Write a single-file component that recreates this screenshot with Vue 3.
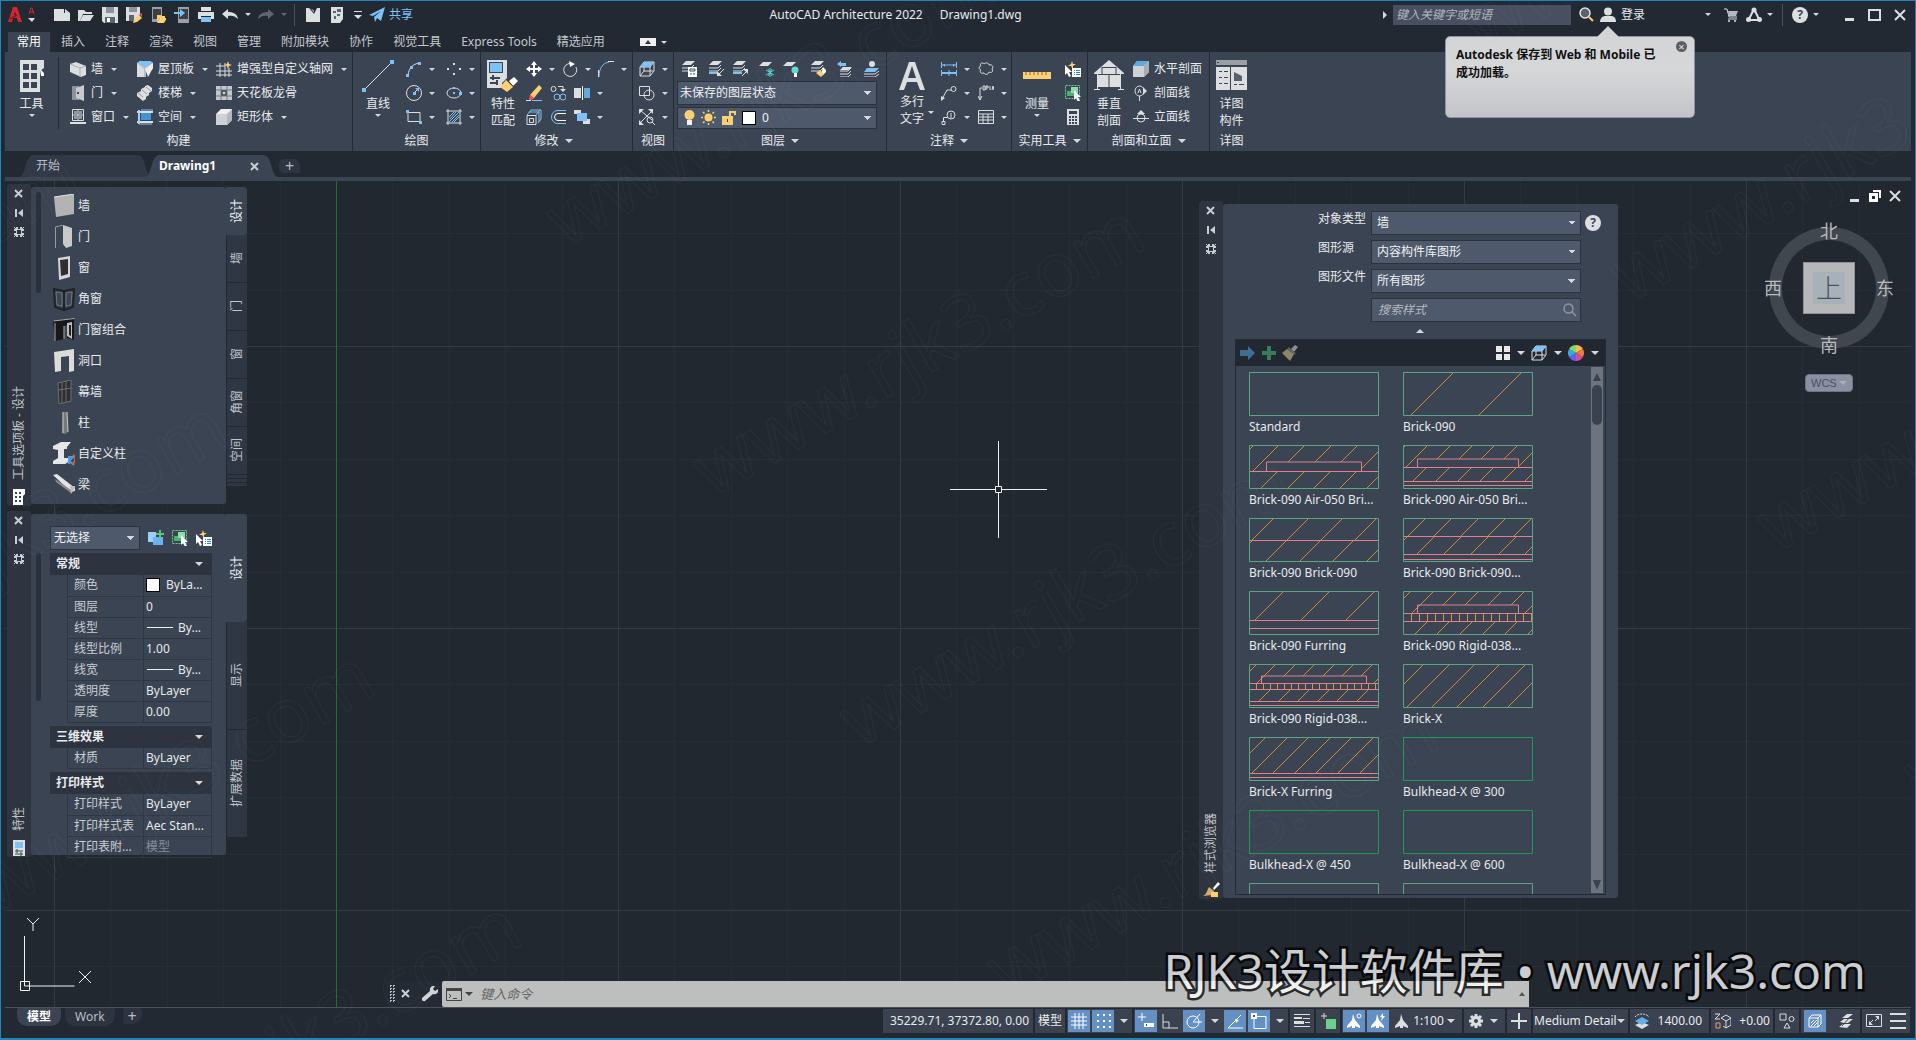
<script setup>
import { h, ref } from 'vue'

const W = '#dcdee0'
const B = '#7ec2f5'
const Y = '#fbcf74'
const D = '#3b4453'
const G = '#6fcf8f'

const s = (d, c = W, w = 1) => `<path d="${d}" fill="none" stroke="${c}" stroke-width="${w}"/>`
const f = (d, c = W) => `<path d="${d}" fill="${c}"/>`
const dash = (d, c, w, pattern) => `<path d="${d}" fill="none" stroke="${c}" stroke-width="${w}" stroke-dasharray="${pattern}"/>`
const sheets = (x = 0, y = 0) =>
  f(`M${x + 5} ${y}h9l-4 4h-9z`) + s(`M${x + 13} ${y + 4}l-3 3h-9M${x + 13} ${y + 7}l-3 3h-9`)
const cursor = (x, y) => f(`M${x} ${y}v10l2-2 2 4 2-1-2-4h3z`, '#fff')
const brush = (x, y) => f(`M${x + 4} ${y}l4 4-4 4-2-1z`, '#fff') + f(`M${x + 1} ${y + 3}l4 4-3 3-5-4z`, Y)

const icons = {
  logo: f('M0 15L5 0h4l5 15h-4l-1-4H5l-1 4zM6 8h2l-1-4z', '#cf2830') + s('M2 12l7-4', '#8d1920', 2),
  logoSmall: s('M1 7l2-6h1l2 6M2 5h4', '#cf2830', 1) + f('M0 11h7l-3 4z'),
  new: f('M0 2h10v4h6v8H0zM11 2l5 4h-5z'),
  open: f('M0 3h6l2 2h6v2H5L2 14H0z') + f('M5 8h11l-4 6H2z'),
  save: f('M0 0h16v16H2l-2-2z') + f('M4 0h8v6H4z', '#8d939c') + f('M3 10h10v6H3z', '#5d646f') + f('M5 11h3v4H5z', '#fff'),
  saveas: f('M0 0h14v8L7 14H0z') + f('M3 0h8v5H3z', '#8d939c') + f('M3 8h5v6H3z', '#5d646f') + f('M7 16l1-4 5-4 3 3-5 4z', Y) + f('M13 7l3 3 1-2-2-2z', '#e4574c'),
  openMobile: f('M2 0h10v15H2z', '#9aa0a8') + f('M3 2h8v10H3z', '#3a3f48') + f('M7 8h4l1 1h3v2h-5l-3 4z', Y) + f('M10 11h7l-3 5H7z', Y),
  saveMobile: f('M4 0h11v16H4z', '#9aa0a8') + f('M5 2h9v10H5z', '#3a3f48') + f('M0 5h6V2l5 4-5 4V7H0z', B),
  print: f('M3 0h10v4H3z') + f('M0 5h16v7h-3V9H3v3H0z') + f('M3 10h10v5H3z', B),
  undo: f('M0 7l6-5v3c6 0 9 2 10 7-3-3-6-4-10-3v3z'),
  redo: f('M16 7l-6-5v3C4 5 1 7 0 12c3-3 6-4 10-3v3z', '#5f6670'),
  mfile: f('M1 1h3l5 6 3-6h3v14H1z') + f('M3 1h2l4 5V3z', '#8d939c'),
  sheet: f('M2 0h12v12l-3 4H2z') + f('M8 2h4v3H8zM4 4h3v2H4zM8 7h3v2H8zM5 9h2v3H5z', '#5d646f'),
  more: f('M0 0h8v1H0zM0 4h8L4 8z'),
  send: f('M0 8L16 0l-4 14-4-3-2 4-1-5L12 4 4 9z', B),
  search: '<circle cx="6" cy="6" r="5" fill="#59616d" stroke="#e6e6e6" stroke-width="1.5"/>' + s('M10 10l4 4', Y, 2),
  user: '<circle cx="8" cy="4.500" r="4" fill="#dcdee0"/>' + f('M0 15c0-4 3-6 5-6h6c3 0 5 2 5 6z'),
  cart: s('M1 2h3l2 8h8') + f('M5 4h10l-2 5H6z', '#b5b8bd') + s('M5 12h9') + '<circle cx="6" cy="14" r="1" fill="#dcdee0"/><circle cx="12" cy="14" r="1" fill="#dcdee0"/>',
  app: s('M8 2L3 12M8 2l5 10M3 13h10', W, 2) + '<circle cx="8" cy="3" r="2.500" fill="#dcdee0"/><circle cx="2.500" cy="12.500" r="2.500" fill="#dcdee0"/><circle cx="13.500" cy="12.500" r="2.500" fill="#dcdee0"/>',
  min: f('M1 10h9v3H1z'),
  max: s('M1 2h11v10H1z', W, 2),
  close: s('M1 2l10 10M11 2L1 12', W, 2),
  restore: f('M4 0h8v8h-2V2H4zM0 3h9v9H0zM3 6v3h3V6z', '#fff'),
  palClose: s('M1 1l7 7M8 1L1 8', '#c9ccd1', 2),
  palHide: f('M1 1h2v8H1zM9 1v8L4 5z', '#c9ccd1'),
  palGear: s('M3 0v2M7 0v2M3 8v2M7 8v2M0 3h2M0 7h2M8 3h2M8 7h2', '#c9ccd1', 2) + s('M2.500 2.500h5v5h-5z', '#c9ccd1', 1) + s('M0 0l3 3M10 0L7 3M0 10l3-3M10 10L7 7', '#c9ccd1'),

  tools: f('M0 0h24v8l-4 3v21H0z') + f('M3 4h6v6H3zM11 4h6v6h-6zM3 13h6v6H3zM11 13h6v6h-6zM3 22h6v6H3zM11 22h6v6h-6z', D) + f('M20 9l4 4v3h-3z', '#fff'),
  wall: f('M0 3l6-2 10 4v9l-5 2L0 11z') + s('M0 3l10 4v9M10 7l6-2', '#a7acb3'),
  door: f('M2 1h7v14H2z', '#8c919a') + f('M6 3l8-3v16l-8-3z', '#c6c9cd') + f('M7 7h2v2H7z', D),
  window: s('M2.500.500h11v11h-11zM8 1v10M3 6h10', W) + f('M0 13h16v2H0z') + f('M4 2h3v3H4zM9 2h3v3H9zM4 7h3v3H4zM9 7h3v3H9z', '#9298a1'),
  roof: f('M0 2l3-2h10l3 2v6H9v8H0z', '#b9bdc3') + f('M0 2l3-2h10l3 2-8 4z', B) + f('M0 2l7 6v8H0z') + f('M16 2v5l-5 9-3-8z', '#eee'),
  stairs: f('M0 8l4-2V4l4-2V1l3-1 4 3v3l-3 2v2l-3 2v2l-3 2-6-5z') + s('M1 8l5 4M5 5l5 4M9 2l5 4', '#969ca5'),
  space: s('M2 1v14M0 3h16M0 13h16', W, 2) + f('M4 4h10v7H4z', '#3f93d6') + s('M2 1v14h13M4 1h12', B, 1),
  gridAxis: s('M4 2v14M9 2v14M13 7v9M0 5h9M0 10h16M0 14h16', W) + f('M12 0l1 3 3 1-3 1-1 4-1-4-3-1 3-1z', Y),
  ceiling: f('M0 1h16v14H0z', '#c4c7cb') + s('M5 1v14M11 1v14M0 5h16M0 11h16', '#757c87') + f('M5 5h6v6H5z', '#555d69') + f('M7 7h2v2H7z', '#ddd'),
  mass: f('M0 5l5-5h11v11l-5 5H0z', '#f0f0f0') + f('M11 5l5-5v11l-5 5z', '#b4b8be') + f('M0 5h11v11H0z', '#cfd2d5'),

  line: s('M3 29L29 3') + f('M0 28h4v4H0zM28 0h4v4h-4z', B),
  arc: s('M2 14C3 7 7 3 13 2') + f('M0 13h3v3H0zM12 1h3v3h-3zM4 5h3v3H4z', B),
  circle: s('M8 .500a7.500 7.500 0 100 15 7.500 7.500 0 100-15M8 8l4-4') + f('M7 7h3v3H7zM9 3h4v4z', B),
  rect: s('M2 3.500h12v9H2z') + f('M0 1h3v3H0zM13 12h3v3h-3z', B),
  points: f('M7 2h2v2H7zM1 7h2v2H1zM13 7h2v2h-2zM7 12h2v2H7z'),
  ellipse: s('M1 8a7 5 0 1014 0A7 5 0 101 8') + f('M7 7h2v2H7zM7 2h2v2H7zM13 7h3v3h-3z', B),
  hatch: s('M2 0v16M14 0v16M0 2h16M0 14h16') + s('M3 8l5-5M3 13L13 3M8 13l5-5M4 10l6-7M6 13l7-7', B),

  match: f('M0 0h20v18l-5 5v5H0z') + f('M2 2h14v11H2z', D) + f('M3 3h12v9H3z', B) + s('M3 18h10M3 23h8M6 15v5M10 20v5', D, 2) + f('M22 21l5-4 4 4-5 5z', '#fff') + f('M19 20l7 7-6 5-7-5z', Y) + s('M20 20l7 7', D),
  move: s('M8 1v14M1 8h14', '#fff', 2) + f('M8 0l3 4H5zM8 16l3-4H5zM0 8l4-3v6zM16 8l-4-3v6z', '#fff'),
  rotate: s('M9 2.500A6.500 6.500 0 1014 6', W, 1) + f('M7 0l6 3-5 3z', '#fff'),
  fillet: s('M1 16C1 7 5 2 11 1', B) + s('M.500 9v7M10 .500h6', W),
  erase: f('M4 10L13 0l3 3-8 10-4 1z', Y) + f('M4 9l4 4-2 2H3z', '#e65a50') + s('M0 15.500h5') + s('M6 15.500h10', B),
  copy: s('M1 4a2.500 2.500 0 105 0 2.500 2.500 0 10-5 0M8 1.500h5v4') + f('M10 4h6l-3 3z') + s('M4 12a3 3 0 106 0A3 3 0 104 12M10 12a3 3 0 106 0 3 3 0 10-6 0', B),
  mirror: f('M0 3h7v10H0z') + f('M10 3h6v10h-6z', '#5fa8e0') + s('M8.500 1v14', '#fff'),
  extrude: s('M1 6.500h9v9H1z M3.500 9.500h4v4h-4z') + s('M3 3h10v10M1 6l4-5h10v9l-3 4M10 6l4-5', B),
  offset: s('M16 1.500H8a6 6 0 000 13h8', B) + s('M16 4.500H8a3.500 3.500 0 000 7h8', '#fff'),
  array: f('M0 1h7v4H0zM9 10h7v5H9z') + f('M3 4h10v8H3z', B),

  cube: s('M1 6h10v9H1zM1 6l4-5h10v9l-4 5M11 6l4-5M5 2v8h9M5 10l-4 5') + f('M1 6l4-5h10l-4 5z', B),
  shapes: s('M.500 1.500h10v9H.500zM5 10a5 5 0 1010 0A5 5 0 105 10'),
  zoomExt: s('M2 2l11 9M13 2L2 13M8 11a3 3 0 106 0 3 3 0 10-6 0M13 13l3 3') + f('M0 0h5L0 5zM14 0v5l-5-5zM0 16h5l-5-5z'),

  layProp: sheets() + f('M7 6h9v10H7z', '#fff') + s('M9 8h5v2H9zM9 13h2M12 13h2', '#34506e'),
  layA: sheets() + s('M1 12h9', B, 2) + s('M16 8l-5 5') + f('M9 15h5l-5-5z'),
  layB: sheets() + s('M1 12h9', B, 2) + s('M10 15l5-5') + f('M16 8h-5l5 5z'),
  layFreeze: f('M4 1h9L9 5H0z') + s('M11 7v9M7 9l8 5M15 9l-8 5M9 8l4 7M13 8l-4 7', '#55d0c8'),
  layOff: f('M4 1h9L9 5H0z') + '<circle cx="12" cy="9" r="3.500" fill="#63d8d8"/>' + f('M11 12h3v4h-3z', '#fff'),
  layMatch: sheets() + brush(9, 6),
  layPrev: s('M5 7h9l-3 3H3M14 10l-3 3H3M14 13l-3 3H3', W) + f('M6 6h9l-4 3H3z') + f('M0 3l4-3v2h5v3H4v1z', B),
  layIso: '<circle cx="8" cy="3" r="3" fill="#dcdee0"/>' + f('M3 7h12l-4 4H0z', B) + s('M15 10l-4 3H0M15 13l-4 3H0'),
  bulb: '<circle cx="5.500" cy="5" r="5" fill="#fbcf74"/>' + f('M3 10h5v5H3z', '#f4f4f4'),
  sun: '<circle cx="7.500" cy="7.500" r="4" fill="#fbcf74"/>' + s('M7.500 0v2M7.500 13v2M0 7.500h2M13 7.500h2M2 2l1.500 1.500M13 13l-1.500-1.500M13 2l-1.500 1.500M2 13l1.500-1.500', Y, 1.5),
  unlock: f('M0 6h11v9H0z', Y) + s('M8 7V2h5v3', Y, 2) + s('M5.500 9v3', D),

  bigA: f('M0 28L10 0h6l10 28h-5l-3-8H8l-3 8zM9 16h8L13 4z'),
  dims: s('M.500 1v6M15.500 1v6M1 4h14M.500 9v6M8 9v6M15.500 9v6', B) + s('M1 12h14', B, 2) + f('M2 4l2-1v3zM14 4l-2-1v3z', B),
  leader: s('M1 14l5-9h4M10 4a2.500 2.500 0 105 0 2.500 2.500 0 10-5 0') + f('M0 16V11l4 2z'),
  tag: s('M6 6a4 4 0 108 0 4 4 0 10-8 0M2.500 13V8.500h4M10 4v5') + s('M1 12.500h3v3H1z'),
  cloud: s('M3 5c-2-3 2-4 3-2 2-2 5-1 5 1 3-1 5 2 3 4 2 3-1 4-3 3-1 3-4 3-5 1-3 1-5-1-3-3-3-1-2-4 0-4z'),
  datum: s('M2 14V3h2M0 11l2 4 2-4M5 1h2v4H5zM8 3h2V1H8v4M12 1v4M14 5l1-4 1 4'),
  table: s('M.500 1.500h15v13H.500zM1 5h15M1 8h15M1 11h15M5 5v9M10 5v9'),

  measure: f('M0 12h28v7H0z', Y) + s('M3 12v3M7 12v3M11 12v3M15 12v3M19 12v3M23 12v3', '#8b6b2c'),
  quickSel: cursor(0, 4) + f('M7 7h9v9H7z', '#fff') + s('M9 9.500h1M11 9.500h4M9 11.500h1M11 11.500h4M9 13.500h1M11 13.500h4', '#2f7fc4') + f('M7 0l1 3 3 0-3 2 0 3-2-3-3 0 3-2z', Y),
  select: dash('M.500.500h14v13H.500z', G, 1, '2 1') + f('M2 6h4V2h7v9H2z', '#4fae72') + f('M6 2h7v6H6z', '#8fdcab') + cursor(9, 5),
  calc: f('M2 0h12v16H2z') + f('M4 2h8v3H4z', D) + f('M4 7h2v2H4zM7 7h2v2H7zM10 7h2v2h-2zM4 10h2v2H4zM7 10h2v2H7zM10 10h2v2h-2zM4 13h2v2H4zM7 13h2v2H7zM10 13h2v2h-2z', D),
  house: f('M15 0l15 13v1H0v-1z') + f('M3 15h24v12H3z') + s('M15 14v13M4 14.500h22M8 7.500h14M8 7v7M22 7v7', D) + s('M0 29.500h6M24 29.500h6M3.500 14v15M26.500 14v15', W),
  horiz: f('M0 5l4-5h12v11l-5 5H0z', '#cfd2d5') + f('M0 5l4-5h12l-5 5z', '#5fa8e0') + f('M11 5l5-5v11l-5 5z', '#a9adb3'),
  sect: s('M2 6a4.500 5 0 109 0 4.500 5 0 10-9 0M6.500 11v5M5 8l1.500-4L8 8') + f('M10 2l4 4-4 4z'),
  elev: s('M4 9a4 4 0 108 0 4 4 0 10-8 0M0 9.500h16') + f('M4 5l4-4 4 4z'),
  detail: f('M0 0h31v5H0z', '#9a9fa6') + f('M0 7h14v23H0zM15 7h16v23H15z') + s('M3 11.500h3M8 11.500h4M3 17.500h3M8 17.500h4M3 23.500h3M8 23.500h4M18 24.500h3M23 24.500h5', D) + f('M18 12l8 4v5h-8z', '#59616d') + f('M1 2h2v1H1z', D),

  pWall: f('M1 3l20-3v20L3 23z', '#b3b3b3') + s('M1 3l20-3', '#e3e3e3'),
  pDoor: s('M2.500 23V2l8-2', '#999', 1) + f('M10 0l9 3v18l-6 2-3-4z', '#c9c9c9'),
  pWindow: f('M5 2l12-2v21L6 24z', '#d6d6d6') + f('M7 4l8-1v15l-7 2z', '#303030'),
  pCorner: s('M1 2l10 2v19L2 20zM21 2L11 4v19l9-3z', '#202328', 2) + s('M3 5l6 1v13l-5-1zM19 5l-6 1v13l5-1z', '#6f757d'),
  pAssembly: f('M0 3l21-3v22l-7-2V7l-3 1v13l-9 2z', '#16181b') + s('M.500 3l21-2.500M2 23V5M11 8v13', '#aaa') + f('M14 5l5-1v17l-5-3z', '#bcbcbc') + f('M16 7h2v11l-2-1z', '#222'),
  pOpening: f('M1 3l20-3v22l-5 1V7l-8 1v14l-6 1z', '#dcdcdc'),
  pCurtain: f('M5 3l13-3v21L6 24z', '#2e2f31') + s('M5 3l13-3v21L6 24zM9 2v21M13 1v21M5 10l13-2', '#6e6e6e'),
  pColumn: f('M10 1h4l1 20-3 2-3-1z', '#777') + s('M10 1v21M14 1l1 20', '#c8c8c8', 1),
  pCustom: f('M0 4l8-4h10l-4 5v2h-3v9h6v3l-5 3H0v-3l5-3V8L0 7z', '#e6e6e6') + s('M16 22v-7h4l-4 4 5 4', '#4a9be8', 2) + s('M20 13c3 2 3 7-1 9', '#e45d2c', 2),
  pBeam: f('M0 2l4-1 18 14v3l-4 1z', '#e4e4e4') + f('M2 6l16 11v3L3 9z', '#8b8b8b') + f('M17 13h5v2l-4 6z', '#bdbdbd'),

  props: f('M0 0h12v16H0z') + f('M2 2h8v6H2z', B) + s('M2 11h8M2 14h8M4 9v4M8 12v4', '#3b4453'),
  palTool: f('M0 0h12v5l-2 2v9H0z', '#fff') + f('M2 3h2v2H2zM6 3h2v2H6zM2 7h2v2H2zM6 7h2v2H6zM2 11h2v2H2zM6 11h2v2H6z', D),
  palStyle: f('M10 6l5-6 2 2-6 6z', '#fff') + f('M6 5l5 4-2 4-9 1c4-2 4-6 6-9z', '#dca870') + f('M8 10h7v5H8z', Y),
  addSel: f('M0 2h9v10H0z', '#9bd0fa') + f('M5 7h10v8H5z', '#6bb2ee') + f('M8 0h8v7H8z', D) + s('M12 0v8M8 4h8', '#58c878', 2),
  arrow: f('M0 5h8V1l7 7-7 7v-4H0z', '#3f6e92'),
  plus: f('M5 1h4v5h5v4H9v5H5v-5H0V6h5z', '#3d7a5a'),
  brushOff: f('M9 4l4-4 3 2-4 5z', '#8d8f93') + f('M5 4l7 5-4 7-8-8z', '#8f8567') + s('M6 3l7 6', '#666', 2),
  tiles: f('M0 1h6v6H0zM8 1h6v6H8zM0 9h6v6H0zM8 9h6v6H8z', '#e8e8e8'),
  wheel: f('M8 8V0a8 8 0 016.900 4z', '#ffb84d') + f('M8 8l6.900-4a8 8 0 010 8z', '#ee7a3e') + f('M8 8l6.900 4A8 8 0 018 16z', '#d84a9b') + f('M8 8v8a8 8 0 01-6.900-4z', '#6a5ce6') + f('M8 8l-6.900 4a8 8 0 010-8z', '#38a9e8') + f('M8 8L1.100 4A8 8 0 018 0z', '#7bdc6a'),
  lens: s('M1 5.500a4.500 4.500 0 109 0 4.500 4.500 0 10-9 0M9 9l4 4', '#8d95a3', 1.5),

  wrench: f('M0 12l8-7c-1-3 2-6 5-5l-2 3 2 2 3-2c1 4-2 6-5 5l-8 7c-2 1-4-1-3-3z', '#d0d2d5'),
  prompt: s('M.500.500h15v12H.500z', '#444') + f('M0 0h16v3H0z', '#444') + s('M3 6l2 2-2 2M7 10.500h4', '#444'),

  sGrid: s('M4 0v16M8 0v16M12 0v16M0 4h16M0 8h16M0 12h16', '#fff'),
  sDots: dash('M2 2h14M2 8h14M2 14h14', '#fff', 2, '2 4'),
  sDyn: s('M4 0v8M0 4h8', '#fff') + f('M6 10h10v4H6z', '#fff') + f('M8 11h1v2H8z', '#456'),
  sOrtho: s('M1 1v14h15M1 9h6v6'),
  sPolar: s('M1 9a6 6 0 1012 0A6 6 0 101 9M7 9h9M7 9l7-8', '#fff'),
  sTrack: s('M16 15H1L14 2', '#fff') + f('M8 6l4 1-3 3z', '#fff'),
  sSnap: s('M3 3.500h12v12H3z', '#fff') + f('M0 0h6v6H0z', '#fff') + f('M2 2h2v2H2z', '#456'),
  sLw: f('M0 1h16v1H0zM0 4h8v2H0zM9 5h7v1H9zM0 8h10v3H0zM0 13h16v1H0zM11 9h5v1h-5z'),
  sCycle: s('M4 0v6M1 3h6') + f('M6 6h10v10H6z', G),
  sAnno: f('M7 1l2 6 5 6v2l-5-2v2H6v-2l-5 2v-2l5-6z', '#fff') + s('M11 3a2 2 0 104 0 2 2 0 10-4 0', '#fff'),
  sAnnoAuto: f('M7 1l2 6 5 6v2l-5-2v2H6v-2l-5 2v-2l5-6z', '#fff') + f('M13 0l-3 4h2l-1 4 4-5h-2z', '#fff'),
  sAnno2: f('M7 1l2 6 5 6v2l-5-2v2H6v-2l-5 2v-2l5-6z'),
  gear: s('M8 1v14M1 8h14M3 3l10 10M13 3L3 13', W, 3) + '<circle cx="8" cy="8" r="5" fill="#dcdee0"/><circle cx="8" cy="8" r="2" fill="#3b4453"/>',
  sPlus: s('M8 0v16M0 8h16', W, 2),
  sLayers: f('M8 9l7 3-7 4-7-4z') + f('M8 4l7 4-7 4-7-4z', '#63aee8') + dash('M1 4c3-4 11-4 14 0', W, 1, '2 1'),
  sZ: s('M0 1h5L0 6h5M6 5l5-3 5 3v7l-5 3-3-2M6 5l5 3 5-3M11 8v7') + s('M1 10h4v5H1z', '#e89a6a'),
  sShapes: s('M1 1h6v6H1zM10 6a2.500 2.500 0 105 0 2.500 2.500 0 10-5 0M5 15l3-5 3 5z'),
  sCube: s('M2 5h9v9H2zM2 5l3-3h9v9l-3 3M11 5l3-3', '#fff') + s('M4 10l3-3M4 13l6-6M7 13l3-3', '#fff'),
  sPlanes: f('M4 5L9 1h6l-5 4zM2 9l4-3h9l-5 4H6zM1 14l4-3h8l-4 4z') + s('M4 13l9-10', '#3b4453'),
  sFull: s('M.500 1.500h15v12H.500z') + s('M4 10l3-3M9 8l3-3') + f('M3 8v4h4zM13 7V3H9z'),
  menu: f('M0 0h16v2H0zM0 7h16v2H0zM0 14h16v2H0z'),
}

const Icon = (p) =>
  h('svg', {
    width: p.w || 16,
    height: p.h || 16,
    viewBox: `0 0 ${p.w || 16} ${p.h || 16}`,
    'aria-hidden': 'true',
    innerHTML: icons[p.name],
  })
Icon.props = ['name', 'w', 'h']

const quick = ['new', 'open', 'save', 'saveas', 'openMobile', 'saveMobile', 'print']
const ribbonTabs = ['常用', '插入', '注释', '渲染', '视图', '管理', '附加模块', '协作', '视觉工具', 'Express Tools', '精选应用']
const build = [
  ['wall', '墙', 1], ['roof', '屋顶板', 1], ['gridAxis', '增强型自定义轴网', 1],
  ['door', '门', 1], ['stairs', '楼梯', 1], ['ceiling', '天花板龙骨', 0],
  ['window', '窗口', 1], ['space', '空间', 1], ['mass', '矩形体', 1],
]
const draw = [['arc', 'points'], ['circle', 'ellipse'], ['rect', 'hatch']]
const modify = [
  [['move', 1], ['rotate', 1], ['fillet', 1]],
  [['erase', 0], ['copy', 0], ['mirror', 1]],
  [['extrude', 0], ['offset', 0], ['array', 1]],
]
const layers = [['layProp'], ['layA', 'layB'], ['layFreeze', 'layOff'], ['layMatch'], ['layPrev'], ['layIso']]
const annotate = [['dims', 'cloud'], ['leader', 'datum'], ['tag', 'table']]
const sections = [['horiz', '水平剖面'], ['sect', '剖面线'], ['elev', '立面线']]

const palette = [
  ['pWall', '墙'], ['pDoor', '门'], ['pWindow', '窗'], ['pCorner', '角窗'], ['pAssembly', '门窗组合'],
  ['pOpening', '洞口'], ['pCurtain', '幕墙'], ['pColumn', '柱'], ['pCustom', '自定义柱'], ['pBeam', '梁'],
]
const paletteTabs = ['设计', '墙', '门', '窗', '角窗', '空间']
const propTabs = ['设计', '显示', '扩展数据']
const props = [
  ['常规', [['颜色', 'ByLa...', 'color'], ['图层', '0'], ['线型', 'By...', 'rule'], ['线型比例', '1.00'], ['线宽', 'By...', 'rule'], ['透明度', 'ByLayer'], ['厚度', '0.00']]],
  ['三维效果', [['材质', 'ByLayer']]],
  ['打印样式', [['打印样式', 'ByLayer'], ['打印样式表', 'Aec Stan...'], ['打印表附...', '模型', 'dim']]],
]

const filters = [['type', '对象类型', '墙'], ['source', '图形源', '内容构件库图形'], ['file', '图形文件', '所有图形']]
const styles = [
  { name: 'Standard' },
  { name: 'Brick-090', hatch: [[1, 43, [50, 118]]] },
  { name: 'Brick-090 Air-050 Bri...', hatch: [[1, 26, [4, 29]], [1, 17, [55, 82, 108]], [1, 24, [135]], [26, 43, [29, 56, 82, 108, 135]]], red: [26], box: [17, 17, 95, 9] },
  { name: 'Brick-090 Air-050 Bri...', hatch: [[1, 22, [2, 24]], [1, 14, [47, 69, 91, 114]], [1, 21, [136]], [22, 36, [24, 47, 69, 91, 114, 136]]], red: [22, 36, 40], box: [14, 14, 101, 8] },
  { name: 'Brick-090 Brick-090', hatch: [[1, 22, [24, 59, 93, 127]], [22, 43, [4, 38, 72, 105, 139]]], red: [22] },
  { name: 'Brick-090 Brick-090...', hatch: [[1, 18, [22, 48, 75, 102, 128]], [18, 36, [5, 32, 59, 86, 114, 140]]], red: [18, 36, 41] },
  { name: 'Brick-090 Furring', hatch: [[1, 29, [34, 80, 125]]], red: [29, 37] },
  { name: 'Brick-090 Rigid-038...', hatch: [[1, 22, [7, 30]], [1, 14, [53, 75, 98, 121]], [1, 22, [143]], [30, 43, [25, 47, 70, 93, 115, 138]]], red: [22, 30], box: [14, 14, 101, 8], band: [22, 30, 8] },
  { name: 'Brick-090 Rigid-038...', hatch: [[1, 19, [7, 26]], [1, 12, [46, 65, 85, 104, 123]], [1, 19, [143]], [25, 37, [22, 42, 61, 81, 100, 120]]], red: [19, 25, 37, 41], box: [12, 12, 105, 7], band: [19, 25, 7] },
  { name: 'Brick-X', hatch: [[1, 43, [20, 46, 71, 96, 122, 147]]] },
  { name: 'Brick-X Furring', hatch: [[1, 36, [16, 38, 59, 81, 102, 124, 146]]], red: [36, 40] },
  { name: 'Bulkhead-X @ 300', deep: true },
  { name: 'Bulkhead-X @ 450', deep: true },
  { name: 'Bulkhead-X @ 600', deep: true },
  { name: '' },
  { name: '' },
]
const hatchPath = (t) =>
  (t.hatch || []).map(([a, b, xs]) => xs.map((x) => `M${x} ${a}L${x - (b - a)} ${b}`).join('')).join('')
const redPath = (t) =>
  (t.red || []).map((y) => `M0 ${y}.5H130`).join('') +
  (t.box ? `M${t.box[0]}.5 ${t.box[1] + t.box[3]}v-${t.box[3]}h${t.box[2]}v${t.box[3]}` : '')
const bandPath = (t) => {
  if (!t.band) return ''
  const [a, b, step] = t.band
  let d = ''
  for (let x = step; x < 130; x += step) d += `M${x}.5 ${a}V${b}`
  return d
}

const marks = []
for (const [x, y] of [[-353, 444], [564, 248], [1481, 53]]) {
  for (let k = 0; k < 4; k++) marks.push([x + 147 * k, y + 250 * k])
}

const query = ref('')
const styleQuery = ref('')
const command = ref('')
</script>

<template>
  <div class="app">
    <header class="titlebar">
      <div class="quick">
        <button class="logo" aria-label="应用程序菜单"><Icon name="logo" :w="14" /><Icon name="logoSmall" :w="7" /></button>
        <button v-for="q in quick" :key="q" class="qbtn" :aria-label="q"><Icon :name="q" /></button>
        <button class="qbtn" aria-label="放弃"><Icon name="undo" /></button>
        <button class="qdrop" aria-label="放弃列表"><i class="caret"></i></button>
        <button class="qbtn" aria-label="重做"><Icon name="redo" /></button>
        <button class="qdrop" aria-label="重做列表"><i class="caret off"></i></button>
        <span class="vline"></span>
        <button class="qbtn" aria-label="项目"><Icon name="mfile" /></button>
        <button class="qbtn" aria-label="图纸"><Icon name="sheet" /></button>
        <button class="qmore" aria-label="自定义"><Icon name="more" :w="8" :h="8" /></button>
        <button class="share"><Icon name="send" />共享</button>
      </div>
      <h1>AutoCAD Architecture 2022<span>Drawing1.dwg</span></h1>
      <div class="account">
        <i class="play"></i>
        <input v-model="query" class="search" aria-label="搜索" placeholder="键入关键字或短语" />
        <button class="find" aria-label="搜索"><Icon name="search" /></button>
        <button class="login"><Icon name="user" />登录<i class="caret"></i></button>
        <button class="cart" aria-label="购物车"><Icon name="cart" /></button>
        <button class="appbtn" aria-label="应用"><Icon name="app" /><i class="caret"></i></button>
        <span class="vline"></span>
        <button class="help" aria-label="帮助"><b class="qmark">?</b><i class="caret"></i></button>
        <button class="win" aria-label="最小化"><Icon name="min" :w="12" :h="14" /></button>
        <button class="win" aria-label="最大化"><Icon name="max" :w="13" :h="14" /></button>
        <button class="win" aria-label="关闭"><Icon name="close" :w="12" :h="14" /></button>
      </div>
    </header>

    <nav class="tabs">
      <button v-for="(t, i) in ribbonTabs" :key="t" :class="{ on: i === 0 }">{{ t }}</button>
      <button class="collapse" aria-label="最小化功能区"><span><i class="up"></i></span><i class="caret"></i></button>
    </nav>

    <section class="ribbon">
      <div class="panel build">
        <div class="body">
          <button class="big"><Icon name="tools" :w="24" :h="32" /><span>工具</span><i class="caret"></i></button>
          <div class="build-grid">
            <button v-for="b in build" :key="b[0]" class="item"><Icon :name="b[0]" />{{ b[1] }}<i v-if="b[2]" class="caret"></i></button>
          </div>
        </div>
        <div class="cap">构建</div>
      </div>
      <div class="panel draw">
        <div class="body">
          <button class="big"><Icon name="line" :w="32" :h="32" /><span>直线</span><i class="caret"></i></button>
          <div>
            <div v-for="(r, i) in draw" :key="i" class="row">
              <button v-for="n in r" :key="n" class="tool drop" :aria-label="n"><Icon :name="n" /><i class="caret"></i></button>
            </div>
          </div>
        </div>
        <div class="cap">绘图</div>
      </div>
      <div class="panel modify">
        <div class="body">
          <button class="big"><Icon name="match" :w="32" :h="32" /><span>特性<br />匹配</span></button>
          <div>
            <div v-for="(r, i) in modify" :key="i" class="row">
              <button v-for="n in r" :key="n[0]" class="tool" :class="{ drop: n[1] }" :aria-label="n[0]"><Icon :name="n[0]" /><i v-if="n[1]" class="caret"></i></button>
            </div>
          </div>
        </div>
        <div class="cap">修改<i class="caret large"></i></div>
      </div>
      <div class="panel view">
        <div class="body">
          <div>
            <div v-for="n in ['cube', 'shapes', 'zoomExt']" :key="n" class="row">
              <button class="tool drop" :aria-label="n"><Icon :name="n" /><i class="caret"></i></button>
            </div>
          </div>
        </div>
        <div class="cap">视图</div>
      </div>
      <div class="panel layer">
        <div class="body">
          <div class="row layer-tools">
            <div v-for="(g, i) in layers" :key="i" class="pair">
              <button v-for="n in g" :key="n" :aria-label="n"><Icon :name="n" /></button>
            </div>
          </div>
          <select class="combo" aria-label="图层状态"><option>未保存的图层状态</option></select>
          <div class="combo current">
            <Icon name="bulb" :w="11" /><Icon name="sun" :w="15" /><Icon name="unlock" :w="14" /><i class="swatch"></i>
            <select aria-label="当前图层"><option>0</option></select>
          </div>
        </div>
        <div class="cap">图层<i class="caret large"></i></div>
      </div>
      <div class="panel annotate">
        <div class="body">
          <button class="big"><Icon name="bigA" :w="26" :h="28" /><span>多行<br />文字</span></button>
          <i class="caret beside"></i>
          <div>
            <div v-for="(r, i) in annotate" :key="i" class="row">
              <button v-for="n in r" :key="n" class="tool drop" :aria-label="n"><Icon :name="n" /><i class="caret"></i></button>
            </div>
          </div>
        </div>
        <div class="cap">注释<i class="caret large"></i></div>
      </div>
      <div class="panel util">
        <div class="body">
          <button class="big"><Icon name="measure" :w="28" :h="32" /><span>测量</span><i class="caret"></i></button>
          <div>
            <div v-for="n in ['quickSel', 'select', 'calc']" :key="n" class="row">
              <button class="tool" :aria-label="n"><Icon :name="n" /></button>
            </div>
          </div>
        </div>
        <div class="cap">实用工具<i class="caret large"></i></div>
      </div>
      <div class="panel section">
        <div class="body">
          <button class="big"><Icon name="house" :w="30" :h="32" /><span>垂直<br />剖面</span></button>
          <div>
            <button v-for="n in sections" :key="n[0]" class="item"><Icon :name="n[0]" />{{ n[1] }}</button>
          </div>
        </div>
        <div class="cap">剖面和立面<i class="caret large"></i></div>
      </div>
      <div class="panel detail">
        <div class="body">
          <button class="big"><Icon name="detail" :w="31" :h="32" /><span>详图<br />构件</span></button>
        </div>
        <div class="cap">详图</div>
      </div>
    </section>

    <nav class="docs">
      <button class="doc">开始</button>
      <button class="doc on">Drawing1<Icon name="palClose" :w="9" :h="9" /></button>
      <button class="doc add" aria-label="新图形">+</button>
    </nav>

    <main class="canvas">
      <svg class="grid" width="100%" height="100%" aria-hidden="true">
        <defs>
          <pattern id="grid" x="49" y="165" width="282" height="282" patternUnits="userSpaceOnUse">
            <path d="M56.500 0v282M113.500 0v282M169.500 0v282M226.500 0v282M0 56.500h282M0 113.500h282M0 169.500h282M0 226.500h282" stroke="#262d36" />
            <path d="M.500 0v282M0 .500h282" stroke="#343b45" />
          </pattern>
        </defs>
        <rect width="100%" height="100%" fill="url(#grid)" />
        <path d="M331.500 0V2000" stroke="#2b6a2f" />
      </svg>
      <svg class="cross" width="97" height="97" viewBox="0 0 97 97" aria-hidden="true">
        <path d="M48.500 0V45M48.500 52V97M0 48.500H45M52 48.500H97M45.500 45.500h6v6h-6z" fill="none" stroke="#f0f0f0" />
      </svg>
      <svg class="ucs" width="76" height="76" viewBox="0 0 76 76" aria-hidden="true">
        <path d="M7 2l6 6v7M19 2l-6 6M4.500 20v50h50M.500 65.500h9v9h-9zM59 55l12 12M71 55L59 67" fill="none" stroke="#f2f2f2" />
      </svg>

      <aside class="pal left-one">
        <div class="rail">
          <button aria-label="关闭"><Icon name="palClose" :w="10" :h="10" /></button>
          <button aria-label="自动隐藏"><Icon name="palHide" :w="10" :h="10" /></button>
          <button aria-label="特性"><Icon name="palGear" :w="10" :h="10" /></button>
          <span class="vtext">工具选项板 - 设计</span>
          <Icon name="palTool" :w="12" />
        </div>
        <div class="sheet">
          <i class="scroll"></i>
          <ul class="palette">
            <li v-for="p in palette" :key="p[0]"><button><Icon :name="p[0]" :w="22" :h="24" />{{ p[1] }}</button></li>
          </ul>
        </div>
        <div class="side">
          <button v-for="(t, i) in paletteTabs" :key="t" :class="{ on: i === 0 }"><span class="vtext">{{ t }}</span></button>
          <i class="stack"></i>
        </div>
      </aside>

      <aside class="pal left-two">
        <div class="rail">
          <button aria-label="关闭"><Icon name="palClose" :w="10" :h="10" /></button>
          <button aria-label="自动隐藏"><Icon name="palHide" :w="10" :h="10" /></button>
          <button aria-label="特性"><Icon name="palGear" :w="10" :h="10" /></button>
          <span class="vtext">特性</span>
          <Icon name="props" :w="12" />
        </div>
        <div class="sheet">
          <i class="scroll"></i>
          <div class="props">
            <div class="pick">
              <select class="combo" aria-label="选择"><option>无选择</option></select>
              <button aria-label="切换选择"><Icon name="addSel" /></button>
              <button aria-label="选择对象"><Icon name="select" /></button>
              <button aria-label="快速选择"><Icon name="quickSel" /></button>
            </div>
            <section v-for="g in props" :key="g[0]" class="group">
              <h2>{{ g[0] }}<i class="caret large"></i></h2>
              <table>
                <tbody>
                  <tr v-for="r in g[1]" :key="r[0]">
                    <th scope="row">{{ r[0] }}</th>
                    <td :class="{ dim: r[2] === 'dim' }"><i v-if="r[2] === 'color'" class="swatch"></i><i v-if="r[2] === 'rule'" class="ruleline"></i>{{ r[1] }}</td>
                  </tr>
                </tbody>
              </table>
            </section>
          </div>
        </div>
        <div class="side tall">
          <button v-for="(t, i) in propTabs" :key="t" :class="{ on: i === 0 }"><span class="vtext">{{ t }}</span></button>
        </div>
      </aside>

      <aside class="pal browser">
        <div class="rail">
          <button aria-label="关闭"><Icon name="palClose" :w="10" :h="10" /></button>
          <button aria-label="自动隐藏"><Icon name="palHide" :w="10" :h="10" /></button>
          <button aria-label="特性"><Icon name="palGear" :w="10" :h="10" /></button>
          <span class="vtext">样式浏览器</span>
          <Icon name="palStyle" :w="17" />
        </div>
        <div class="sheet">
          <form class="filters" @submit.prevent>
            <template v-for="(x, i) in filters" :key="x[0]">
              <label :for="x[0]">{{ x[1] }}</label>
              <select :id="x[0]" class="combo"><option>{{ x[2] }}</option></select>
              <button v-if="i === 0" class="qhelp" type="button" aria-label="帮助"><b class="qmark">?</b></button>
              <span v-else></span>
            </template>
            <span></span>
            <div class="combo find-style"><input v-model="styleQuery" aria-label="搜索样式" placeholder="搜索样式" /><Icon name="lens" :w="14" :h="14" /></div>
          </form>
          <i class="up fold"></i>
          <div class="list">
            <div class="bar">
              <button aria-label="添加到图形"><Icon name="arrow" /></button>
              <button aria-label="新建"><Icon name="plus" :w="14" /></button>
              <button aria-label="应用样式"><Icon name="brushOff" /></button>
              <span class="grow"></span>
              <button aria-label="视图"><Icon name="tiles" :w="14" /><i class="caret large"></i></button>
              <button aria-label="方向"><Icon name="cube" /><i class="caret large"></i></button>
              <button aria-label="颜色"><Icon name="wheel" /><i class="caret large"></i></button>
            </div>
            <div class="wrap">
              <div class="thumbs">
                <figure v-for="(t, i) in styles" :key="i">
                  <svg width="130" height="44" viewBox="0 0 130 44" aria-hidden="true">
                    <path :d="hatchPath(t)" stroke="#d08a35" />
                    <path :d="bandPath(t)" stroke="#e0913c" />
                    <path :d="redPath(t)" fill="none" stroke="#e0808c" />
                    <path d="M.500.500h129v43H.500z" fill="none" :stroke="t.deep ? '#1f9a55' : '#5aa583'" />
                  </svg>
                  <figcaption>{{ t.name }}</figcaption>
                </figure>
              </div>
              <div class="vbar"><i class="tri"></i><i class="grip"></i><i class="tri down"></i></div>
            </div>
          </div>
        </div>
      </aside>

      <div class="mdi">
        <button aria-label="最小化"><Icon name="min" :w="12" :h="13" /></button>
        <button aria-label="还原"><Icon name="restore" :w="12" :h="12" /></button>
        <button aria-label="关闭"><Icon name="close" :w="12" :h="13" /></button>
      </div>
      <div class="viewcube">
        <i class="ring"></i>
        <button class="n">北</button>
        <button class="w">西</button>
        <button class="top"><span>上</span></button>
        <button class="e">东</button>
        <button class="s">南</button>
      </div>
      <button class="wcs">WCS<i></i></button>

      <div class="cmd">
        <i class="dots"></i>
        <button aria-label="关闭"><Icon name="palClose" :w="10" :h="10" /></button>
        <button aria-label="自定义"><Icon name="wrench" /></button>
        <div class="line">
          <Icon name="prompt" :w="16" :h="13" /><i class="caret large"></i>
          <input v-model="command" aria-label="命令" placeholder="键入命令" />
          <i class="up"></i>
        </div>
      </div>
    </main>

    <footer class="foot">
      <nav class="layouts">
        <button class="on">模型</button>
        <button>Work</button>
        <button class="add" aria-label="新建布局">+</button>
      </nav>
      <div class="status">
        <div class="grp coords">35229.71, 37372.80, 0.00</div>
        <div class="grp"><button class="model">模型</button></div>
        <div class="grp">
          <button class="st on" aria-label="栅格"><Icon name="sGrid" /></button>
          <button class="st on" aria-label="捕捉"><Icon name="sDots" /></button>
          <button class="dd" aria-label="捕捉设置"><i class="caret large"></i></button>
        </div>
        <div class="grp">
          <button class="st on" aria-label="动态输入"><Icon name="sDyn" /></button>
          <button class="st" aria-label="正交"><Icon name="sOrtho" /></button>
          <button class="st on" aria-label="极轴"><Icon name="sPolar" /></button>
          <button class="dd" aria-label="极轴设置"><i class="caret large"></i></button>
          <button class="st on" aria-label="对象捕捉追踪"><Icon name="sTrack" /></button>
          <button class="st on" aria-label="对象捕捉"><Icon name="sSnap" /></button>
          <button class="dd" aria-label="对象捕捉设置"><i class="caret large"></i></button>
        </div>
        <div class="grp"><button class="st" aria-label="线宽"><Icon name="sLw" /></button></div>
        <div class="grp"><button class="st" aria-label="选择循环"><Icon name="sCycle" /></button></div>
        <div class="grp">
          <button class="st on" aria-label="注释可见性"><Icon name="sAnno" /></button>
          <button class="st on" aria-label="自动缩放"><Icon name="sAnnoAuto" /></button>
          <button class="scale"><Icon name="sAnno2" />1:100<i class="caret large"></i></button>
        </div>
        <div class="grp"><button class="ws" aria-label="切换工作空间"><Icon name="gear" /><i class="caret large"></i></button></div>
        <div class="grp"><button class="st" aria-label="注释监视器"><Icon name="sPlus" /></button></div>
        <div class="grp"><button class="medium">Medium Detail<i class="caret large"></i></button></div>
        <div class="grp"><button class="cut"><Icon name="sLayers" />1400.00</button></div>
        <div class="grp"><button class="lift"><Icon name="sZ" />+0.00</button></div>
        <div class="grp"><button class="st" aria-label="替换 Z 值"><Icon name="sShapes" /></button></div>
        <div class="grp iso">
          <button class="st on" aria-label="隔离对象"><Icon name="sCube" /></button>
          <button class="st" aria-label="硬件加速"><Icon name="sPlanes" /></button>
        </div>
        <div class="grp">
          <button class="st" aria-label="全屏显示"><Icon name="sFull" /></button>
          <button class="st" aria-label="自定义"><Icon name="menu" /></button>
        </div>
      </div>
    </footer>

    <div class="toast" role="status">
      <p>Autodesk 保存到 Web 和 Mobile 已成功加载。</p>
      <button aria-label="关闭">×</button>
    </div>

    <svg class="marks" width="100%" height="100%" aria-hidden="true">
      <text v-for="(m, i) in marks" :key="i" :transform="`translate(${m[0]} ${m[1]}) rotate(-30)`">www.rjk3.com</text>
    </svg>
    <div class="brand">RJK3设计软件库 • www.rjk3.com</div>
  </div>
</template>

<style>
body {
  margin: 0;
  overflow: hidden;
  background: #222933;
}
</style>

<style scoped>
* {
  box-sizing: border-box;
}
.app {
  position: relative;
  display: flex;
  flex-direction: column;
  height: 100vh;
  overflow: hidden;
  border: 1px solid #1f86ba;
  border-bottom-width: 2px;
  background: #222933;
  color: #e8eaed;
  font: 12px/16px "Noto Sans", "Noto Sans CJK SC", sans-serif;
}
button,
input,
select {
  margin: 0;
  padding: 0;
  border: 0;
  border-radius: 0;
  background: none;
  color: inherit;
  font: inherit;
  outline: 0;
  appearance: none;
}
svg {
  display: block;
  flex: none;
}
h1,
h2,
p,
ul,
figure {
  margin: 0;
  padding: 0;
  font-weight: 400;
  font-size: 12px;
  list-style: none;
}
.caret,
.up {
  flex: none;
  display: block;
  width: 0;
  height: 0;
  border: 3px solid transparent;
  border-top-color: #d5d8dc;
  border-bottom-width: 0;
}
.caret.large {
  border-width: 4px 4px 0;
}
.caret.off {
  border-top-color: #5f6670;
}
.up {
  border-width: 0 4px 4px;
  border-color: transparent transparent #d5d8dc;
}
.vline {
  width: 1px;
  height: 22px;
  background: #4b525e;
}
.swatch {
  flex: none;
  width: 14px;
  height: 14px;
  border: 1px solid #000;
  background: #fff;
}
.qmark {
  display: block;
  width: 16px;
  height: 16px;
  border-radius: 8px;
  background: #dcdee0;
  color: #3b4453;
  text-align: center;
}

/* title bar */
.titlebar {
  display: flex;
  align-items: center;
  flex: none;
  height: 31px;
  padding-bottom: 4px;
}
.titlebar button {
  display: flex;
  align-items: center;
  justify-content: center;
  flex: none;
}
.quick {
  display: flex;
  align-items: center;
  flex: 0 0 40%;
  padding-left: 7px;
}
.quick .logo {
  justify-content: flex-start;
  gap: 6px;
  width: 42px;
}
.quick .qbtn {
  width: 24px;
  height: 24px;
}
.quick .qdrop {
  width: 12px;
  height: 24px;
}
.quick .vline {
  margin: 0 6px 0 4px;
}
.quick .qmore {
  width: 17px;
  height: 12px;
}
.quick .share {
  gap: 4px;
  padding-left: 3px;
  color: #7ec2f5;
}
h1 {
  padding-left: 3px;
}
h1 span {
  margin-left: 17px;
}
.account {
  display: flex;
  align-items: center;
  margin-left: auto;
  padding-right: 3px;
}
.play {
  margin-right: 6px;
  border: 4px solid transparent;
  border-left-color: #d5d8dc;
  border-right-width: 0;
}
.search {
  width: 178px;
  height: 20px;
  padding: 0 3px;
  background: #474f61;
  font-style: italic;
}
input::placeholder {
  color: #b4b8bf;
  opacity: 1;
}
.titlebar .find {
  width: 29px;
  padding-left: 2px;
}
.titlebar .login {
  justify-content: flex-start;
  gap: 5px;
  width: 120px;
}
.login .caret {
  margin-left: auto;
  margin-right: 9px;
}
.titlebar .cart {
  width: 22px;
}
.titlebar .appbtn,
.titlebar .help {
  gap: 5px;
  margin-left: 4px;
}
.account .vline {
  margin: 0 5px 0 9px;
}
.titlebar .help {
  margin-right: 18px;
}
.titlebar .win {
  width: 25px;
}

/* ribbon */
.tabs {
  display: flex;
  flex: none;
  height: 20px;
  padding-left: 7px;
  color: #c3c7cd;
}
.tabs button {
  padding: 0 10px;
}
.tabs .on {
  padding: 0 9px;
  margin-right: 1px;
  background: #3b4453;
  color: #fff;
}
.tabs .collapse {
  display: flex;
  align-items: center;
  gap: 5px;
  margin-left: 15px;
}
.collapse span {
  width: 16px;
  padding: 2px 5px;
  background: #f0f0f0;
}
.collapse .up {
  border-width: 0 3px 4px;
  border-bottom-color: #333;
}
.ribbon {
  display: flex;
  flex: none;
  height: 99px;
  margin: 0 4px;
  background: #3b4453;
}
.panel {
  display: flex;
  flex-direction: column;
  flex: none;
  border-right: 1px solid #242b35;
}
.panel.detail {
  border: 0;
}
.body {
  display: flex;
  flex: none;
  height: 79px;
  padding-top: 5px;
}
.cap {
  display: flex;
  align-items: center;
  justify-content: center;
  gap: 6px;
  height: 20px;
}
.big {
  display: flex;
  flex: none;
  flex-direction: column;
  align-items: center;
  padding-top: 3px;
  line-height: 17px;
}
.big span {
  margin-top: 3px;
}
.big .caret {
  margin-top: 2px;
}
.row {
  display: flex;
  height: 24px;
}
.tool {
  display: flex;
  align-items: center;
  flex: none;
  width: 24px;
}
.tool .caret {
  margin-left: 7px;
}
.item {
  display: flex;
  align-items: center;
  gap: 5px;
  height: 24px;
  white-space: nowrap;
}
.item .caret {
  margin-left: 3px;
}
.build {
  width: 348px;
}
.build .big {
  width: 54px;
  height: 72px;
  border-right: 1px solid #242b35;
}
.build-grid {
  display: grid;
  grid-template-columns: 67px 79px auto;
  grid-auto-rows: 24px;
  padding-left: 11px;
}
.draw {
  width: 128px;
}
.draw .big {
  width: 44px;
  margin: 0 6px 0 3px;
}
.draw .drop {
  width: 40px;
}
.modify {
  width: 152px;
}
.modify .big {
  width: 32px;
  margin: 0 7px 0 6px;
}
.drop {
  width: 36px;
}
.view {
  width: 41px;
  padding-left: 6px;
}
.view .cap,
.modify .cap {
  padding-right: 6px;
}
.layer {
  width: 213px;
}
.layer .body {
  flex-direction: column;
  padding-left: 3px;
}
.layer-tools {
  gap: 11px;
  padding-left: 4px;
  align-items: center;
}
.pair {
  display: flex;
  gap: 8px;
}
.combo {
  height: 24px;
  padding: 0 18px 0 5px;
  border: 1px solid #2b323e;
  background-color: #4e596b;
  color: #f0f1f3;
}
select.combo,
.current select {
  background-image: conic-gradient(from -45deg at 50% 100%, #d5d8dc 90deg, transparent 0);
  background-image: linear-gradient(to bottom left, #d5d8dc 50%, transparent 50%), linear-gradient(to bottom right, #d5d8dc 50%, transparent 50%);
  background-size: 4px 4px;
  background-repeat: no-repeat;
  background-position: right 8px center, right 4px center;
}
.layer .combo {
  flex: none;
  width: 200px;
  padding-left: 2px;
}
.layer .current {
  display: flex;
  align-items: center;
  gap: 6px;
  height: 22px;
  margin-top: 2px;
  padding: 0 0 0 6px;
}
.current select {
  flex: 1;
  height: 20px;
}
.annotate {
  width: 125px;
}
.annotate .big {
  width: 26px;
  margin-left: 12px;
  padding-top: 5px;
}
.annotate .beside {
  margin: 54px 7px 0 3px;
}
.annotate .drop {
  width: 37px;
}
.util {
  width: 76px;
}
.util .big {
  width: 42px;
  margin: 0 7px 0 4px;
}
.section {
  width: 122px;
}
.section .big {
  width: 30px;
  margin: 0 9px 0 6px;
}
.detail {
  width: 43px;
}
.detail .big {
  width: 43px;
}

/* document tabs */
.docs {
  display: flex;
  align-items: flex-end;
  flex: none;
  height: 30px;
  margin: 0 4px;
  padding-left: 14px;
  border-bottom: 4px solid #3b4453;
}
.doc {
  width: 133px;
  height: 22px;
  padding-left: 17px;
  background: #313946;
  clip-path: path("M0 22C8 20 5 0 15 0H118C128 0 125 20 133 22Z");
  color: #b9bec6;
  text-align: left;
}
.doc.on {
  display: flex;
  align-items: center;
  justify-content: space-between;
  margin-left: -7px;
  padding: 0 19px 0 14px;
  background: #3b4453;
  color: #fff;
  font-weight: 700;
}
.doc.add {
  width: 21px;
  height: 14px;
  margin: 0 0 4px 1px;
  padding: 0;
  border-radius: 5px 7px 0 5px;
  background: #2f3643;
  clip-path: none;
  font-size: 16px;
  line-height: 12px;
  text-align: center;
}

/* drawing area */
.canvas {
  position: relative;
  flex: 1;
  min-height: 0;
  margin: 0 4px;
  overflow: hidden;
  border-bottom: 1px solid #4a515b;
  background: #212830;
}
.grid {
  position: absolute;
  inset: 0;
}
.cross {
  position: absolute;
  left: 945px;
  top: 260px;
}
.ucs {
  position: absolute;
  left: 15px;
  bottom: 15px;
}
.pal {
  position: absolute;
  display: flex;
}
.rail {
  display: flex;
  flex-direction: column;
  align-items: center;
  gap: 9px;
  width: 24px;
  padding: 5px 0 1px;
  border-radius: 3px;
  background: #2e3440;
}
.rail button {
  height: 10px;
}
.rail .vtext {
  margin-top: auto;
  color: #c0c4ca;
}
.vtext {
  writing-mode: vertical-rl;
  text-orientation: sideways;
  transform: rotate(180deg);
  white-space: nowrap;
}
.sheet {
  flex: 1;
  min-width: 0;
  margin: 3px 0 2px;
  border-radius: 3px;
  background: #3b4453;
}
.pal .sheet {
  display: flex;
}
.scroll {
  flex: none;
  width: 5px;
  margin-left: 5px;
  border-radius: 3px;
  background: #2a313c;
}
.left-one {
  left: 2px;
  top: 3px;
  height: 322px;
}
.left-one .sheet,
.left-two .sheet {
  flex: none;
  width: 195px;
}
.left-one .scroll {
  height: 101px;
  margin-top: 5px;
}
.palette {
  padding: 3px 0 0 12px;
}
.palette button {
  display: flex;
  align-items: center;
  gap: 3px;
  height: 31px;
}
.side {
  width: 21px;
  margin: 3px 0;
}
.side button {
  display: flex;
  align-items: center;
  justify-content: center;
  width: 21px;
  height: 48px;
  border-bottom: 1px solid #222933;
  border-left: 1px solid #222933;
  background: #303744;
  color: #c0c4ca;
}
.side .on {
  border: 0;
  border-radius: 0 3px 3px 0;
  background: #3b4453;
  color: #f0f1f3;
}
.side.tall button {
  height: 108px;
}
.stack {
  display: block;
  height: 12px;
  border-left: 1px solid #222933;
  background: repeating-linear-gradient(#303744 0 3px, #222933 3px 4px);
}
.left-two {
  left: 2px;
  top: 330px;
  height: 346px;
}
.left-two .scroll {
  height: 148px;
  margin-top: 39px;
}
.props {
  width: 162px;
  margin-left: 9px;
  padding-top: 12px;
}
.pick {
  display: flex;
  align-items: center;
  gap: 8px;
  height: 24px;
  margin-bottom: 3px;
}
.pick .combo {
  width: 90px;
  padding-left: 3px;
}
.group {
  margin-bottom: 3px;
}
.group h2 {
  display: flex;
  align-items: center;
  justify-content: space-between;
  height: 22px;
  padding: 0 9px 0 6px;
  background: #2d333f;
  font-weight: 700;
}
.group table {
  width: 144px;
  margin-left: 17px;
  border-collapse: collapse;
  table-layout: fixed;
}
.group tr {
  height: 21px;
}
.group th,
.group td {
  width: 76px;
  padding: 0 0 0 6px;
  border: 1px solid #2f3744;
  border-top: 0;
  color: #c9cdd3;
  font-weight: 400;
  line-height: 20px;
  text-align: left;
  white-space: nowrap;
}
.group td {
  width: 68px;
  padding-left: 2px;
  color: #e6e8eb;
}
.group .dim {
  color: #858c98;
}
.group .swatch {
  display: inline-block;
  margin-right: 6px;
  vertical-align: -3px;
}
.ruleline {
  display: inline-block;
  width: 26px;
  height: 1px;
  margin: 0 5px 0 1px;
  background: #f0f0f0;
  vertical-align: 4px;
}
.browser {
  right: 292px;
  top: 20px;
  width: 420px;
  height: 698px;
}
.browser .sheet {
  flex-direction: column;
  margin: 3px 1px 1px 0;
}
.filters {
  display: grid;
  grid-template-columns: 49px 210px 16px;
  gap: 5px 4px;
  margin-left: 95px;
  padding-top: 7px;
}
.filters .combo {
  width: 210px;
}
.filters label {
  white-space: nowrap;
}
.qhelp {
  align-self: center;
}
.find-style {
  display: flex;
  align-items: center;
  padding: 0 3px 0 6px;
}
.find-style input {
  flex: 1;
  min-width: 0;
  font-style: italic;
}
.fold {
  margin: 7px auto 6px 193px;
}
.list {
  display: flex;
  flex: 1;
  flex-direction: column;
  min-height: 0;
  margin: 0 12px 3px 12px;
  border: 1px solid #242b35;
}
.bar {
  display: flex;
  align-items: center;
  flex: none;
  gap: 6px;
  height: 26px;
  padding: 0 6px 0 4px;
  background: #222831;
}
.bar button {
  display: flex;
  align-items: center;
  gap: 7px;
}
.grow {
  flex: 1;
}
.wrap {
  display: flex;
  flex: 1;
  justify-content: space-between;
  min-height: 0;
}
.thumbs {
  display: grid;
  grid-template-columns: 130px 130px;
  grid-auto-rows: 73px;
  column-gap: 24px;
  padding: 6px 0 0 13px;
  overflow: hidden;
}
figcaption {
  margin-top: 3px;
  white-space: nowrap;
}
.vbar {
  display: flex;
  flex-direction: column;
  align-items: center;
  width: 12px;
  margin: 1px 2px;
  background: #6d7480;
}
.grip {
  flex: none;
  width: 10px;
  height: 40px;
  border-radius: 5px;
  background: #3a4250;
}
.tri {
  margin: 6px 0 4px;
  border: 4px solid transparent;
  border-top-width: 0;
  border-bottom: 8px solid #3a4250;
}
.tri.down {
  margin: auto 0 3px;
  border-top: 10px solid #3a4250;
  border-bottom-width: 0;
}
.mdi {
  position: absolute;
  right: 10px;
  top: 8px;
  display: flex;
  align-items: center;
  gap: 8px;
}
.viewcube {
  position: absolute;
  right: 16px;
  top: 40px;
  display: grid;
  grid-template-columns: 20px 92px 20px;
  grid-template-rows: 20px 94px 20px;
  place-items: center;
  color: #b9babc;
  font-size: 18px;
  line-height: 20px;
}
.ring {
  position: absolute;
  inset: 6px;
  border: 13px solid #40474f;
  border-radius: 50%;
}
.viewcube button {
  position: relative;
}
.n,
.s {
  grid-column: 2;
}
.n {
  grid-row: 1;
}
.w {
  grid-area: 2/1;
}
.e {
  grid-area: 2/3;
}
.viewcube .top {
  display: flex;
  align-items: center;
  justify-content: center;
  grid-area: 2/2;
  width: 52px;
  height: 52px;
  border: 1px solid #8d9195;
  background: #b6b7b9;
}
.top span {
  width: 32px;
  height: 32px;
  background: #a7b1b8;
  color: #4b5157;
  font: 300 26px/30px "Noto Sans CJK SC", sans-serif;
}
.wcs {
  position: absolute;
  right: 58px;
  top: 193px;
  display: flex;
  align-items: center;
  justify-content: space-between;
  width: 48px;
  height: 18px;
  padding: 0 5px;
  border: 1px solid #6d7284;
  border-radius: 4px;
  background: #8b90a2;
  color: #4b5060;
  font: 11px/14px "Liberation Sans", sans-serif;
}
.wcs i {
  border: 4px solid transparent;
  border-top-color: #a9aebd;
  border-bottom-width: 0;
}
.cmd {
  position: absolute;
  left: 20%;
  right: 382px;
  bottom: 0;
  display: flex;
  align-items: center;
  height: 26px;
  padding-left: 3px;
  background: #252b35;
}
.cmd .dots {
  width: 6px;
  height: 18px;
  margin-right: 6px;
  background: repeating-conic-gradient(#b9bcc1 0 25%, transparent 0 100%) 0 0/3px 3px;
}
.cmd > button {
  margin-right: 11px;
}
.cmd > button + button {
  margin-right: 4px;
}
.line {
  display: flex;
  align-items: center;
  flex: 1;
  align-self: stretch;
  padding: 0 4px;
  border-radius: 2px 0 0 2px;
  background: #bdbebe;
}
.line .caret {
  margin: 0 7px 0 3px;
  border-top-color: #444;
}
.line .up {
  border-width: 0 3px 4px;
  border-bottom-color: #555;
}
.line input {
  flex: 1;
  color: #222;
  font-style: italic;
  font-size: 13px;
}
.line input::placeholder {
  color: #666;
}

/* footer */
.foot {
  display: flex;
  flex: none;
  justify-content: space-between;
  height: 30px;
  padding: 0 5px 0 16px;
}
.layouts {
  display: flex;
  align-items: flex-start;
}
.layouts button {
  height: 18px;
  padding: 0 10px;
  border-radius: 2px 2px 10px 10px;
  background: #2d3440;
  color: #b9bec6;
}
.layouts .on {
  margin-right: 4px;
  background: #3b4453;
  color: #fff;
  font-weight: 700;
}
.layouts .add {
  height: 16px;
  margin-left: 8px;
  padding: 0 5px;
  border-radius: 2px 2px 10px 2px;
  font-size: 16px;
  line-height: 14px;
}
.status {
  display: flex;
  gap: 2px;
  padding-top: 1px;
  white-space: nowrap;
}
.grp {
  display: flex;
  align-items: center;
  height: 24px;
  background: #3a4250;
}
.grp button {
  display: flex;
  align-items: center;
  justify-content: center;
  height: 22px;
}
.coords {
  justify-content: flex-end;
  width: 150px;
  padding-right: 4px;
}
.grp .model {
  width: 30px;
}
.grp .st {
  width: 22px;
  margin: 0 1px;
}
.grp .on {
  background: #6490c4;
}
.grp .dd {
  width: 17px;
}
.grp .scale,
.grp .ws,
.grp .medium,
.grp .cut,
.grp .lift {
  justify-content: space-between;
  padding: 0 7px 0 4px;
}
.grp .scale {
  width: 72px;
}
.grp .ws {
  width: 41px;
}
.grp .medium {
  width: 95px;
  padding: 0 4px 0 1px;
}
.grp .cut {
  width: 79px;
}
.grp .lift {
  width: 62px;
  padding-right: 3px;
}
.iso {
  gap: 7px;
  padding: 0 2px;
}

/* overlays */
.toast {
  position: absolute;
  top: 35px;
  right: 220px;
  width: 250px;
  height: 82px;
  padding: 9px 34px 0 10px;
  border: 1px solid #8f949c;
  border-radius: 5px;
  background: linear-gradient(#d3d4d6, #d6d7d9 40%, #c3c4c8);
  color: #111;
}
.toast::before {
  content: "";
  position: absolute;
  left: 151px;
  top: -11px;
  border: 11px solid transparent;
  border-top-width: 0;
  border-bottom-color: #d3d4d6;
}
.toast p {
  font-weight: 700;
  line-height: 18px;
}
.toast button {
  position: absolute;
  right: 7px;
  top: 4px;
  width: 11px;
  height: 11px;
  border-radius: 6px;
  background: #5b5f65;
  color: #e0e0e0;
  font-size: 11px;
  line-height: 10px;
}
.marks {
  position: absolute;
  inset: 0;
  pointer-events: none;
}
.marks text {
  fill: none;
  stroke: #fff;
  stroke-opacity: 0.04;
  stroke-width: 1px;
  font-size: 76px;
}
.brand {
  position: absolute;
  right: 49px;
  bottom: 33px;
  color: #fff;
  font-size: 48px;
  line-height: 68px;
  white-space: nowrap;
  opacity: 0.77;
  -webkit-text-stroke: 5px #000;
  paint-order: stroke fill;
  pointer-events: none;
}
</style>
